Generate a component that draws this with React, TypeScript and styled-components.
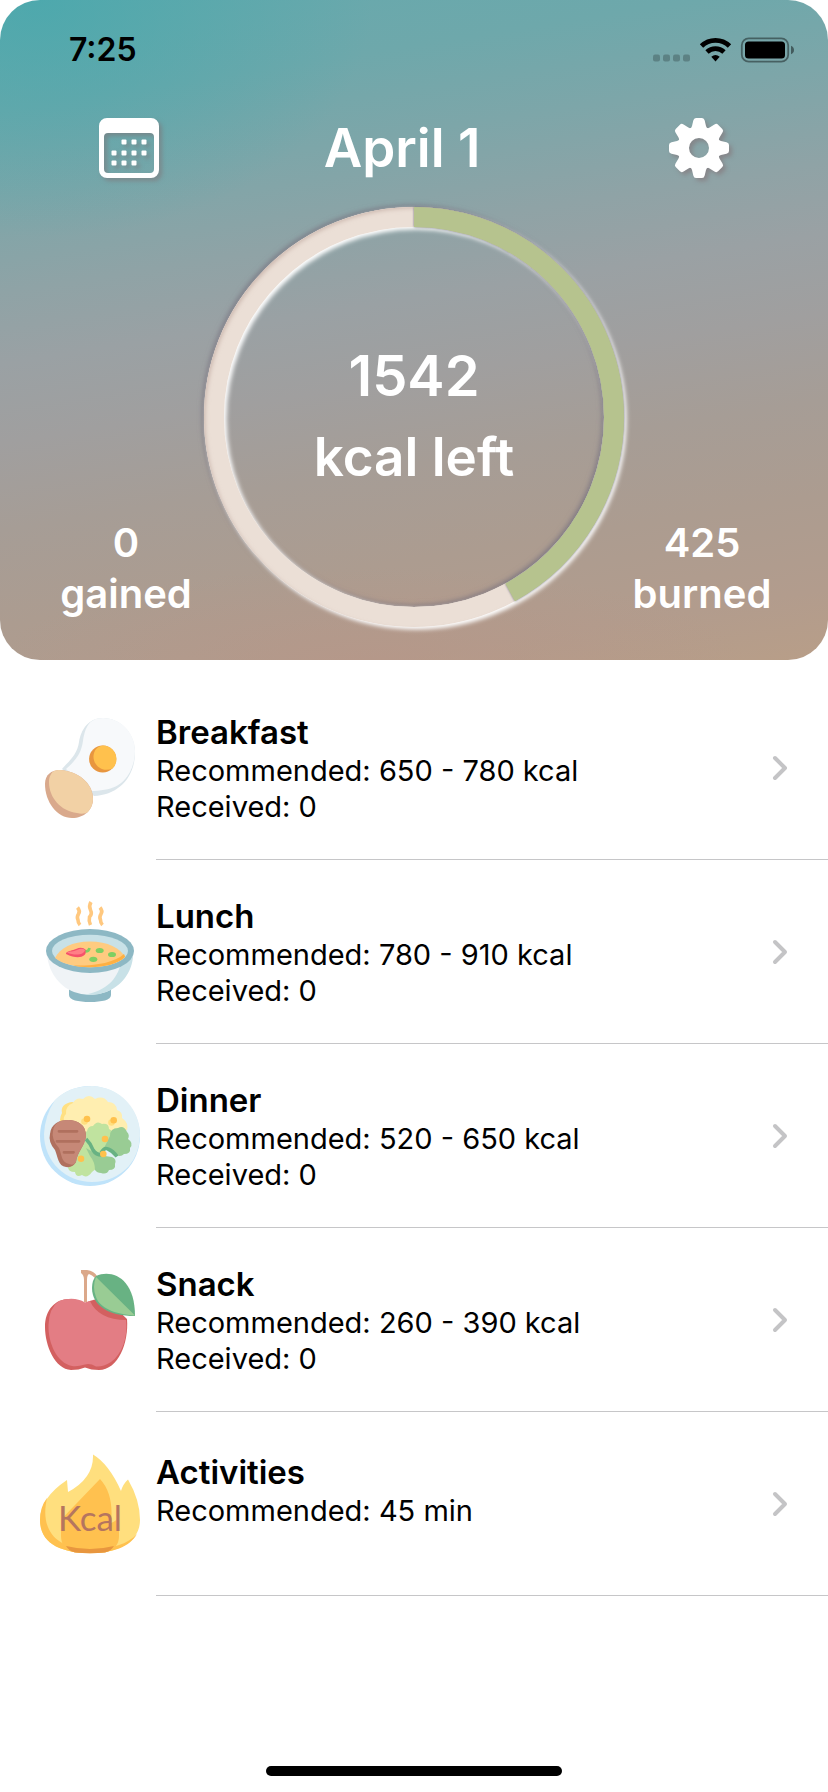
import React from "react";
import styled, { createGlobalStyle } from "styled-components";

const GlobalStyle = createGlobalStyle`
  *, *::before, *::after { box-sizing: border-box; }
  body {
    margin: 0;
    background: #fff;
    color: #000;
    font-family: Inter, "Liberation Sans", sans-serif;
  }
`;

const Screen = styled.div`
  display: flex;
  flex-direction: column;
  min-height: 100vh;
`;

const Hero = styled.header`
  padding-bottom: 33px;
  border-radius: 40px;
  color: #fff;
  background:
    radial-gradient(ellipse 40% 36% at 5% 0%, rgba(62, 168, 173, 0.6), rgba(90, 168, 173, 0) 100%),
    radial-gradient(ellipse 45% 14% at 45% 100%, rgba(184, 148, 134, 0.5), rgba(184, 148, 134, 0) 100%),
    linear-gradient(171deg, #65a9ad 0%, #6ea8ab 14%, #7da6a9 25%, #8fa3a6 37%, #9aa1a4 46%, #a09f9f 56%, #a69d96 67%, #ac9c90 79%, #b29c8d 91%, #b89e88 100%);
`;

const StatusBar = styled.div`
  display: flex;
  align-items: center;
  justify-content: space-between;
  height: 100px;
  padding: 0 34px 0 69px;
  color: #000;
`;

const Time = styled.time`
  font-size: 32px;
  line-height: 38px;
  font-weight: 600;
`;

const Toolbar = styled.nav`
  display: flex;
  align-items: center;
  justify-content: space-between;
  height: 60px;
  margin-top: 18px;
  padding: 0 99px;
`;

const DateTitle = styled.h1`
  margin: 0;
  padding-right: 24px;
  font-size: 53px;
  line-height: 62px;
  font-weight: 600;
`;

const IconButton = styled.button`
  width: 60px;
  height: 60px;
  padding: 0;
  border: 0;
  background: none;
  color: #fff;
  cursor: pointer;

  svg {
    display: block;
    overflow: visible;
    filter: drop-shadow(3px 3px 2px rgba(130, 105, 110, 0.5));
  }
`;

const Summary = styled.section`
  display: grid;
  grid-template-columns: 1fr 420px 1fr;
  align-items: end;
  margin-top: 29px;
  padding: 0 48px;
`;

const Stat = styled.p`
  display: flex;
  flex-direction: column;
  align-items: center;
  margin: 0 0 8px;
  font-size: 40px;
  line-height: 51px;
  font-weight: 600;
`;

const Gauge = styled.div`
  display: grid;
  place-items: center;

  > * { grid-area: 1 / 1; }

  svg {
    display: block;
    overflow: visible;
  }
`;

const GaugeLabel = styled.p`
  display: flex;
  flex-direction: column;
  align-items: center;
  margin: 0;
  font-size: 53px;
  line-height: 81px;
  font-weight: 600;
`;

const GaugeValue = styled.span`
  font-size: 56px;
`;

const MealList = styled.ul`
  margin: 16px 0 0;
  padding: 0;
  list-style: none;
`;

const MealLink = styled.a`
  display: flex;
  align-items: center;
  gap: 16px;
  padding-left: 40px;
  color: inherit;
  text-decoration: none;

  > svg {
    flex: none;
    overflow: visible;
  }
`;

const MealBody = styled.div`
  display: flex;
  flex: 1;
  align-items: center;
  justify-content: space-between;
  height: 184px;
  padding-right: 40px;
  border-bottom: 1px solid #c6c6c8;
`;

const MealText = styled.div`
  min-height: 106px;
`;

const MealName = styled.h2`
  margin: 0;
  font-size: 33px;
  line-height: 42px;
  font-weight: 600;
`;

const MealLine = styled.p`
  margin: 0;
  font-size: 29px;
  line-height: 36px;
`;

const HomeIndicator = styled.div`
  width: 296px;
  height: 10px;
  margin: auto auto 16px;
  border-radius: 5px;
  background: #000;
`;

const CalendarIcon = () => (
  <svg width="60" height="60" viewBox="0 0 60 60" fill="currentColor" aria-hidden="true">
    <path
      fillRule="evenodd"
      d="M8 0H52a8 8 0 0 1 8 8V52a8 8 0 0 1-8 8H8a8 8 0 0 1-8-8V8a8 8 0 0 1 8-8ZM9 15a4 4 0 0 0-4 4V51a4 4 0 0 0 4 4H51a4 4 0 0 0 4-4V19a4 4 0 0 0-4-4Z"
    />
    {[
      [25, 24], [35, 24], [45, 24],
      [15, 35], [25, 35], [35, 35], [45, 35],
      [15, 45], [25, 45], [35, 45],
    ].map(([x, y]) => (
      <rect key={`${x}-${y}`} x={x - 2.5} y={y - 2.5} width="5" height="5" rx="1" />
    ))}
  </svg>
);

const GearIcon = () => (
  <svg width="60" height="60" viewBox="0 0 60 60" fill="currentColor" aria-hidden="true">
    <circle cx="30" cy="30" r="15.8" fill="none" stroke="currentColor" strokeWidth="11.6" />
    {[0, 45, 90, 135, 180, 225, 270, 315].map((angle) => (
      <path
        key={angle}
        transform={`rotate(${angle} 30 30)`}
        d="M20 12Q22.500 10.500 23 8L24.300 2.500Q24.800 0 27 0H33Q35.200 0 35.700 2.500L37 8Q37.500 10.500 40 12L36 17H24Z"
      />
    ))}
  </svg>
);

const StatusIcons = () => (
  <svg width="142" height="26" viewBox="652 36.500 142 26" aria-hidden="true">
    <g fill="#000" fillOpacity="0.22">
      {[653, 663, 673, 683].map((x) => (
        <rect key={x} x={x} y="54" width="7" height="7" rx="2" />
      ))}
    </g>
    <g fill="none" stroke="#000" strokeWidth="4.800">
      <path d="M701.500 45.500A20 20 0 0 1 729.500 45.500" />
      <path d="M707 51.500A12.500 12.500 0 0 1 724 51.500" />
    </g>
    <path d="M711.300 56.300Q715.500 52.800 719.700 56.300L715.500 61Z" />
    <rect x="741.800" y="37.800" width="46.400" height="23.400" rx="7" fill="none" stroke="#000" strokeOpacity="0.42" strokeWidth="1.800" />
    <rect x="745" y="41" width="40" height="17" rx="3.500" />
    <path d="M791 45.200Q794 46.500 794 49.500T791 53.800Z" fillOpacity="0.45" />
  </svg>
);

const RING_LENGTH = 2 * Math.PI * 200;

const Ring = ({ progress }: { progress: number }) => (
  <svg width="420" height="420" viewBox="0 0 420 420" aria-hidden="true">
    <defs>
      <filter id="trackShadow" x="-10%" y="-10%" width="120%" height="120%">
        <feDropShadow dx="2.500" dy="2.500" stdDeviation="2" floodColor="#fff" floodOpacity="1" result="light" />
        <feDropShadow in="SourceGraphic" dx="-2" dy="-2" stdDeviation="2.500" floodColor="#75707e" floodOpacity="0.7" result="dark" />
        <feMerge>
          <feMergeNode in="dark" />
          <feMergeNode in="light" />
        </feMerge>
      </filter>
      <filter id="soften" x="-10%" y="-10%" width="120%" height="120%">
        <feGaussianBlur stdDeviation="2.500" />
      </filter>
      <filter id="barShadow" x="-10%" y="-10%" width="120%" height="120%">
        <feDropShadow dx="0" dy="0" stdDeviation="1.200" floodColor="#66667a" floodOpacity="0.9" />
      </filter>
      <clipPath id="band">
        <path
          clipRule="evenodd"
          d="M210 0A210 210 0 1 1 209.900 0ZM210 20A190 190 0 1 0 210.100 20Z"
        />
      </clipPath>
    </defs>
    <circle cx="210" cy="210" r="200" fill="none" stroke="#ebdfd6" strokeWidth="20" filter="url(#trackShadow)" />
    <g clipPath="url(#band)">
      <circle cx="212" cy="212" r="214" fill="none" stroke="#c4aea5" strokeWidth="5" filter="url(#soften)" />
    </g>
    <g filter="url(#barShadow)">
      <circle
        cx="210"
        cy="210"
        r="200"
        fill="none"
        stroke="#b6c38e"
        strokeWidth="20"
        strokeDasharray={`${RING_LENGTH * progress} ${RING_LENGTH}`}
        transform="rotate(-90 210 210)"
      />
    </g>
  </svg>
);

const Chevron = () => (
  <svg width="16" height="26" viewBox="0 0 16 26" fill="none" stroke="#c4c4c6" strokeWidth="4" strokeLinecap="round" strokeLinejoin="round" aria-hidden="true">
    <path d="M3 3L13 13L3 23" />
  </svg>
);

const Picture = ({ children }: { children: React.ReactNode }) => (
  <svg width="100" height="100" viewBox="0 0 100 100" aria-hidden="true">
    {children}
  </svg>
);

const EggPicture = () => (
  <Picture>
    <path fill="#dce6eb" d="M63 0C80 0 95 15 95 34C95 60 78 77 54 78L22 51C30 42 37 37 39 24C41 12 48 0 63 0Z" />
    <path fill="#f7f9fb" d="M63 0C81 0 95 15 95 33C95 41 93 48 90 54C83 67 72 73 50 73L26 51C36 42 41 36 43 23C45 11 48 0 63 0Z" />
    <circle cx="62.700" cy="41" r="13.600" fill="#e8963f" />
    <path fill="#ffc14d" d="M63 27.500C71 27.500 76.400 34 76.400 41C76.400 45 75 48 72.500 50.500C62 55 53 47 53.500 38C53.800 33 57 28 63 27.500Z" />
    <path fill="#d9a98c" d="M5 66C5 57 11 52 20 52C38 53 53 65 53 81C53 92 44 100 32 100C17 100 5 84 5 66Z" />
    <path fill="#f2d1a5" d="M9 64C9 59 11 55 14 53C16 52 18 52 20 52C38 53 53 65 53 81C53 86 51 90 48 94C45 96 41 96 37 95C21 93 9 80 9 64Z" />
  </Picture>
);

const SoupPicture = () => (
  <Picture>
    <g fill="none" stroke="#ffc87f" strokeWidth="3.600">
      <path d="M37.500 5.500Q40.500 9 38.500 12T38 18Q38 21 40 23" />
      <path d="M51 0Q48.500 4 50.500 8T49.500 15Q48.500 19 50.500 23" />
      <path d="M60 5.500Q63 9 61 12T60.500 18Q60.500 21 62.500 23" />
    </g>
    <path fill="#8db8c4" d="M29 87H71V93C71 98 62 100 50 100S29 98 29 93Z" />
    <path fill="#eff3f6" d="M7 52H93C92 68 82 84 66 90Q58 93 50 93T34 90C18 84 8 68 7 52Z" />
    <path fill="#c8e1e7" d="M93 54C92 70 82 84 66 90Q56 94 45 92.500C62 90 76 80 80 64Z" />
    <ellipse cx="50" cy="49" rx="44" ry="22" fill="#8db8c4" />
    <ellipse cx="50" cy="49" rx="38" ry="16.200" fill="#c8e1e7" />
    <path fill="#ffcb80" d="M15 56C20 46 32 39.500 50 39.500S80 46 85 55C78 62 64 65.200 50 65.200S22 62 15 56Z" />
    <path fill="#ffb042" d="M84 52Q85 54 85 55C78 62 64 65.200 50 65.200Q40 65.200 33 63.500C55 64 74 61 84 52Z" />
    <path fill="#f5526b" d="M26 51C29 48 32 49 36 47Q42 44 46 48C47 55 38 58 26 52Z" />
    <path fill="#ff7f86" d="M27 50.500C30 49 33 50 37 48Q42 45.500 45 48C44 53 35 54 27 50.500Z" />
    <path fill="none" stroke="#7fcf62" strokeWidth="2.600" d="M45.500 49.500Q49 49.500 49.500 46" />
    <g fill="#7fcf62">
      <ellipse cx="59.700" cy="48.500" rx="4" ry="2.600" />
      <ellipse cx="72" cy="52.500" rx="4" ry="2.600" />
      <ellipse cx="53.300" cy="57.300" rx="4" ry="2.600" />
    </g>
  </Picture>
);

const DinnerPicture = () => (
  <Picture>
    <circle cx="50" cy="50" r="50" fill="#bfe3fa" />
    <path fill="#e2f1f7" d="M52 0A49 49 0 0 1 100 50Q99 68 89 80Q74 96 52 96C26 96 4 76 4 48Q5 29 15 14Q29 0 52 0Z" />
    <path fill="#ffe082" d="M32 16Q20 18 22 27Q18 34 22 40L50 44L46 20Z" />
    <path fill="#ffeeb0" d="M33 17Q36 11 43 13Q49 7 55 13Q63 9 68 16Q76 16 77 24Q83 26 82 32Q89 37 87 44L60 56L30 42Q20 34 26 28Q25 20 33 17Z" />
    <g fill="#ffdf80">
      <circle cx="44.500" cy="35.500" r="3.300" />
      <circle cx="71.500" cy="36.500" r="3.300" />
    </g>
    <path fill="#c0e39f" d="M46 54Q42 49 47 45Q48 40 53 40Q57 34 62 38Q69 37 69 43Q74 45 72 51L68 62L60 68Q63 78 57 82L52 86Q47 93 42 89Q36 92 35 86Q28 86 28 81L38 66Z" />
    <path fill="#99cc94" d="M64 62L70 50Q70 42 78 42Q84 39 87 46Q90 49 88 53Q94 57 90 62Q91 68 84 68Q80 72 75 68ZM46 62L58 69L72 71Q77 73 75 78Q76 84 69 84Q67 89 61 87Q57 87 55 84Q55 76 50 70Z" />
    <path fill="none" stroke="#68b283" strokeWidth="3.600" d="M46 53Q51 58 53 64Q56 69 62 69" />
    <path fill="none" stroke="#68b283" strokeWidth="3.600" d="M61 67Q64 61 68 63Q73 65 77 70.500" />
    <g fill="#ffc14d">
      <circle cx="47" cy="33" r="3.300" />
      <circle cx="73.700" cy="34.300" r="3.300" />
      <circle cx="65" cy="53" r="3.300" />
      <circle cx="63.300" cy="68" r="3.300" />
      <circle cx="41" cy="72.700" r="3.300" />
    </g>
    <path fill="#b0705e" d="M10 48C11 38 19 34 28 34C38 34 46 39 46 50C45 60 37 66 36 76Q33 82 26 81C18 80 18 71 15 64Q8 56 10 48Z" />
    <path fill="#c68877" d="M13 45C14 37 20 34 28 34C38 34 46 39 46 50C45 60 37 66 36 76Q34 80 29 78C21 76 22 69 19 62Q11 53 13 45Z" />
    <path stroke="#b0705e" strokeWidth="2.800" strokeLinecap="round" d="M19 45.300H37M17 55.300H39M24 66.300H33.500" />
  </Picture>
);

const ApplePicture = () => (
  <Picture>
    <path fill="#d36060" d="M45 33Q56 28 66 29L87 49C89 73 78 100 59 100Q51 100 45 97.500Q39 100 31 100C15 99 5 76 5 57C5 40 15 29 29 29Q37 29 45 33Z" />
    <path fill="#e37d84" d="M45 32.500L50 31C55 43 68 50 86 50C88 68 82 84 71 92Q63 97 56 96.500Q50 93 45 94.500Q37 97 32 96C17 93 8 73 8.500 55Q9 38 19 31Q34 26 45 32.500Z" />
    <path fill="#dba88a" d="M41 0H47Q54 1 57 6L55 8Q52 5 49 4Q47 5 47 10V32H44V10Q44 5 41 3Z" />
    <path fill="#68b283" d="M56 6C72 -1 95 8 95 46C69 46 52 36 52 18Q52 10 56 6Z" />
    <path fill="#99cc94" d="M56 7L95 45.500C74 44 60 38 56 27Q52 17 56 7Z" />
  </Picture>
);

const FlamePicture = () => (
  <Picture>
    <path
      fill="#ffdf7e"
      d="M53 .5Q69 10 81 37Q83 30 88 25.500Q100 46 100 66C100 88 78 99 50 99S0 90 0 66Q0 44 27 26L28 38Q54 24 53 .5Z"
    />
    <path fill="#ffc14f" d="M7 44C0 74 14 95 50 95C72 95 88 90 97 80C90 93 72 99 50 99C22 99 0 90 0 66Q0 53 7 44Z" />
    <path fill="#ffc14f" d="M60 25Q74 40 71 69Q77 67 79 62V82Q79 95 65 98.500Q50 100 35 98.500Q21 95 21 82V66Q29 57 36 50Z" />
    <path fill="#e8963f" d="M26 92Q38 95 50 95T74 92Q71 97 65 98.500Q50 100 35 98.500Q29 97 26 92Z" />
    <text x="50" y="77" textAnchor="middle" fontFamily="Lato" fontSize="35" fill="#b5755f">
      Kcal
    </text>
  </Picture>
);

type Meal = { name: string; lines: string[]; Picture: React.ComponentType };

const meals: Meal[] = [
  { name: "Breakfast", lines: ["Recommended: 650 - 780 kcal", "Received: 0"], Picture: EggPicture },
  { name: "Lunch", lines: ["Recommended: 780 - 910 kcal", "Received: 0"], Picture: SoupPicture },
  { name: "Dinner", lines: ["Recommended: 520 - 650 kcal", "Received: 0"], Picture: DinnerPicture },
  { name: "Snack", lines: ["Recommended: 260 - 390 kcal", "Received: 0"], Picture: ApplePicture },
  { name: "Activities", lines: ["Recommended: 45 min"], Picture: FlamePicture },
];

export default function App() {
  return (
    <Screen>
      <GlobalStyle />
      <Hero>
        <StatusBar>
          <Time>7:25</Time>
          <StatusIcons />
        </StatusBar>
        <Toolbar>
          <IconButton type="button" aria-label="Calendar">
            <CalendarIcon />
          </IconButton>
          <DateTitle>April 1</DateTitle>
          <IconButton type="button" aria-label="Settings">
            <GearIcon />
          </IconButton>
        </Toolbar>
        <Summary>
          <Stat>
            <span>0</span>
            <span>gained</span>
          </Stat>
          <Gauge>
            <Ring progress={0.42} />
            <GaugeLabel>
              <GaugeValue>1542</GaugeValue>
              <span>kcal left</span>
            </GaugeLabel>
          </Gauge>
          <Stat>
            <span>425</span>
            <span>burned</span>
          </Stat>
        </Summary>
      </Hero>
      <main>
        <MealList>
          {meals.map(({ name, lines, Picture: MealPicture }) => (
            <li key={name}>
              <MealLink href={`#${name.toLowerCase()}`}>
                <MealPicture />
                <MealBody>
                  <MealText>
                    <MealName>{name}</MealName>
                    {lines.map((line) => (
                      <MealLine key={line}>{line}</MealLine>
                    ))}
                  </MealText>
                  <Chevron />
                </MealBody>
              </MealLink>
            </li>
          ))}
        </MealList>
      </main>
      <HomeIndicator />
    </Screen>
  );
}
